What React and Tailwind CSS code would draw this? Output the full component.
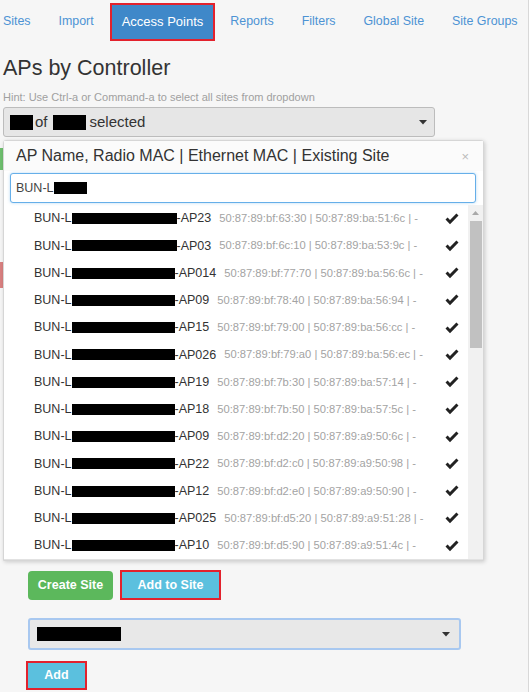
import React from 'react';

const tabs = ['Sites', 'Import', 'Access Points', 'Reports', 'Filters', 'Global Site', 'Site Groups'];

const aps = [
  { name: 'AP23', w: 105, mac: '50:87:89:bf:63:30 | 50:87:89:ba:51:6c | -' },
  { name: 'AP03', w: 105, mac: '50:87:89:bf:6c:10 | 50:87:89:ba:53:9c | -' },
  { name: 'AP014', w: 103, mac: '50:87:89:bf:77:70 | 50:87:89:ba:56:6c | -' },
  { name: 'AP09', w: 103, mac: '50:87:89:bf:78:40 | 50:87:89:ba:56:94 | -' },
  { name: 'AP15', w: 103, mac: '50:87:89:bf:79:00 | 50:87:89:ba:56:cc | -' },
  { name: 'AP026', w: 103, mac: '50:87:89:bf:79:a0 | 50:87:89:ba:56:ec | -' },
  { name: 'AP19', w: 103, mac: '50:87:89:bf:7b:30 | 50:87:89:ba:57:14 | -' },
  { name: 'AP18', w: 103, mac: '50:87:89:bf:7b:50 | 50:87:89:ba:57:5c | -' },
  { name: 'AP09', w: 103, mac: '50:87:89:bf:d2:20 | 50:87:89:a9:50:6c | -' },
  { name: 'AP22', w: 103, mac: '50:87:89:bf:d2:c0 | 50:87:89:a9:50:98 | -' },
  { name: 'AP12', w: 103, mac: '50:87:89:bf:d2:e0 | 50:87:89:a9:50:90 | -' },
  { name: 'AP025', w: 103, mac: '50:87:89:bf:d5:20 | 50:87:89:a9:51:28 | -' },
  { name: 'AP10', w: 103, mac: '50:87:89:bf:d5:90 | 50:87:89:a9:51:4c | -' },
];

function Caret() {
  return (
    <svg width="8" height="5" viewBox="0 0 8 5">
      <path d="M0 0 L8 0 L4 4.5 Z" fill="#333" />
    </svg>
  );
}

function Check() {
  return (
    <svg width="14" height="12" viewBox="0 0 14 12">
      <path d="M0.5 6.6 L2.6 4.5 L5 6.9 L11.4 0.5 L13.5 2.6 L5 11.2 Z" fill="#222" />
    </svg>
  );
}

export default function App() {
  return (
    <div
      className="w-[529px] h-[692px] overflow-hidden bg-[#f6f6f6] border-r border-[#d8d8d8] text-[#333]"
      style={{ fontFamily: '"Liberation Sans", Arial, sans-serif' }}
    >
      {/* tabs */}
      <div className="flex h-[42px] ml-[-11px] text-[12.4px] whitespace-nowrap">
        {tabs.map((t) =>
          t === 'Access Points' ? (
            <div
              key={t}
              className="mt-[3px] ml-[2px] mr-[1px] h-[38px] px-[10px] flex items-center border-2 border-[#e3222d] bg-[#3f88c9] text-white text-[13px]"
            >
              {t}
            </div>
          ) : (
            <div key={t} className="px-[14px] flex items-center text-[#4d93d4]">
              {t}
            </div>
          )
        )}
      </div>

      <h2 className="mt-[13px] ml-[3px] text-[21.5px] leading-[26px] font-normal">APs by Controller</h2>
      <div className="mt-[10px] ml-[3px] text-[11px] leading-[12px] text-[#a0a0a0]">
        Hint: Use Ctrl-a or Command-a to select all sites from dropdown
      </div>

      {/* site select */}
      <div className="mt-[4px] ml-[3px] w-[432px] h-[30px] flex items-center bg-[#e6e6e6] border border-[#bcbcbc] rounded-[3px] pl-[6px] pr-[6px] text-[15px]">
        <span className="w-[23px] h-[15px] bg-black" />
        <span className="ml-[2px]">of</span>
        <span className="ml-[5px] w-[33px] h-[15px] bg-black" />
        <span className="ml-[4px]">selected</span>
        <span className="ml-auto mr-[1px] flex">
          <Caret />
        </span>
      </div>

      {/* dropdown panel */}
      <div className="mt-[3px] flex">
        <div className="w-[3px] flex flex-col">
          <div className="mt-[8px] h-[22px] bg-[#6fbf6f]" />
          <div className="mt-[92px] h-[26px] bg-[#d98080]" />
        </div>
        <div className="w-[481px] bg-white border border-[#d6d6d6] rounded-t-[3px] shadow-[1px_1px_4px_rgba(0,0,0,0.18)]">
          <div className="h-[30px] flex items-center pl-[12px] pr-[14px] bg-[#fbfbfb] text-[16px]">
            <span>AP Name, Radio MAC | Ethernet MAC | Existing Site</span>
            <span className="ml-auto text-[13px] text-[#bbb] leading-none">×</span>
          </div>
          <div className="mt-[2px] ml-[6px] w-[466px] h-[30px] flex items-center border border-[#66afe9] rounded-[3px] bg-white pl-[5px] text-[12.5px] text-[#444] shadow-[0_0_3px_rgba(102,175,233,0.5)]">
            BUN-L
            <span className="w-[33px] h-[12px] bg-black" />
          </div>
          <div className="mt-[2px] flex border-b border-[#e2e2e2]">
            <div className="flex-1">
              {aps.map((a, i) => (
                <div key={i} className="h-[27.25px] flex items-center pl-[30px] whitespace-nowrap">
                  <span className="text-[12.5px]">BUN-L</span>
                  <span className="h-[11px] bg-black" style={{ width: a.w }} />
                  <span className="text-[12.5px]">-{a.name}</span>
                  <span className="ml-[8px] text-[11.2px] text-[#a3a3a3]">{a.mac}</span>
                  <span className="ml-auto mr-[9px] flex">
                    <Check />
                  </span>
                </div>
              ))}
            </div>
            <div className="w-[15px] bg-[#f1f1f1] flex flex-col items-center">
              <svg className="mt-[6px]" width="7" height="4" viewBox="0 0 7 4">
                <path d="M0 4 L3.5 0 L7 4 Z" fill="#a8a8a8" />
              </svg>
              <div className="mt-[6px] w-[12px] h-[127px] bg-[#c1c1c1]" />
            </div>
          </div>
        </div>
      </div>

      {/* actions */}
      <div className="mt-[9px] ml-[28px] flex items-center gap-[7px] text-[12.5px] font-bold text-white">
        <button className="w-[85px] h-[29px] rounded-[4px] bg-[#5cb85c]">Create Site</button>
        <button className="w-[101px] h-[30px] border-2 border-[#e3222d] bg-[#5bc0de]">Add to Site</button>
      </div>

      <div className="mt-[18px] ml-[28px] w-[433px] h-[32px] flex items-center bg-[#e8e8e8] border-2 border-[#a8c8f0] rounded-[3px] pl-[7px] pr-[9px]">
        <span className="w-[84px] h-[14px] bg-black" />
        <span className="ml-auto flex">
          <Caret />
        </span>
      </div>

      <button className="mt-[11px] ml-[26px] w-[61px] h-[29px] border-2 border-[#e3222d] bg-[#5bc0de] text-white text-[12.5px] font-bold">
        Add
      </button>
    </div>
  );
}
